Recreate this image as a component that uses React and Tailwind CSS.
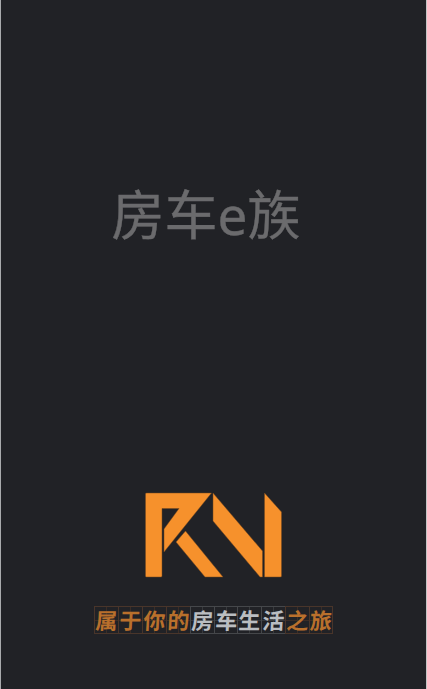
const slogan = [
  ['属', 'o'], ['于', 'o'], ['你', 'o'], ['的', 'o'],
  ['房', 'w'], ['车', 'w'], ['生', 'w'], ['活', 'w'],
  ['之', 'o'], ['旅', 'o'],
];

function Logo() {
  return (
    <svg width="138" height="86" viewBox="144 492 138 86" fill="#f6912c" stroke="#77491f" strokeWidth="0.5" aria-label="RV">
      <path d="M145.500 494Q145.500 493 146.500 493H211.500L164 552V529L179 508.500H162V576Q162 577 161 577H146.500Q145.500 577 145.500 576Z" />
      <path d="M185.500 531L223 577H205L176 542Z" />
      <path d="M213 493L262.500 551V577H260L213 521Z" />
      <path d="M264.500 493L281.500 512V576Q281.500 577 280.500 577H264.500Z" />
    </svg>
  );
}

function Cell({ char, tone }) {
  const orange = tone === 'o';
  return (
    <div className={`relative h-7 w-[23.9px] border-y border-l last:border-r ${orange ? 'border-[#49352a]' : 'border-[#45474a]'}`}>
      <span className={`absolute inset-x-0 top-[13px] h-px ${orange ? 'bg-[#3b2d26]' : 'bg-[#37393c]'}`} />
      <span className={`absolute inset-y-0 left-[11px] w-px ${orange ? 'bg-[#3b2d26]' : 'bg-[#37393c]'}`} />
      <span className={`relative block -skew-x-3 text-center text-[22px] leading-[25px] font-bold ${orange ? 'text-[#b9702c]' : 'text-[#babdc1]'}`}>
        {char}
      </span>
    </div>
  );
}

export default function App() {
  return (
    <main className="flex h-[689px] w-[427px] flex-col items-center overflow-hidden border-x border-l-[#a9abad] border-r-[#c4c5c5] bg-[#212226] font-['Noto_Sans','Noto_Sans_CJK_SC',sans-serif]">
      <h1 className="mt-[175px] mr-[15px] h-[80px] text-[53px] leading-[80px] font-normal whitespace-nowrap text-[#6b6b6d] [-webkit-text-stroke:0.4px_#6b6b6d]">房车e族</h1>
      <div className="mt-[237px] mr-[2px] h-[86px]">
        <Logo />
      </div>
      <div className="mt-7 flex font-['Noto_Sans_CJK_SC',sans-serif]">
        {slogan.map(([char, tone]) => <Cell key={char} char={char} tone={tone} />)}
      </div>
    </main>
  );
}
